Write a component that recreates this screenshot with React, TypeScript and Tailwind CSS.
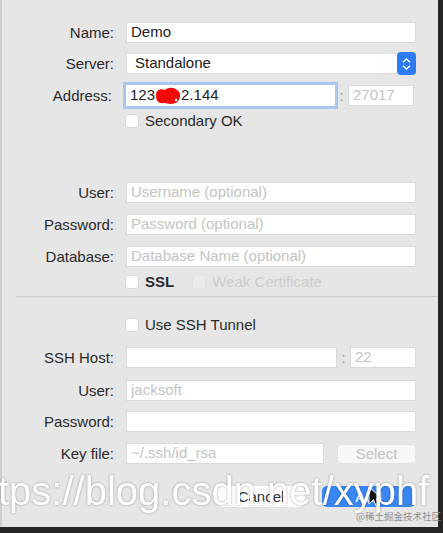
import type { ReactNode } from 'react';

const font = { fontFamily: '"Liberation Sans", Arial, sans-serif' };

function Label({ children }: { children: ReactNode }) {
  return (
    <div className="w-[112px] shrink-0 text-right text-[15px] leading-none text-[#2a2a2a]">
      {children}
    </div>
  );
}

function Field({ value, placeholder, className = 'w-[290px]' }: { value?: string; placeholder?: string; className?: string }) {
  return (
    <input
      readOnly
      defaultValue={value}
      placeholder={placeholder}
      className={`h-[21px] bg-white border border-[#dadada] px-[4px] text-[15px] text-[#222] placeholder:text-[#c4c4c4] outline-none ${className}`}
      style={font}
    />
  );
}

function Check({ label, faded }: { label: string; faded?: boolean }) {
  return (
    <div className="flex items-center gap-[6px]">
      <span className={`w-[14px] h-[14px] rounded-[3px] border ${faded ? 'bg-[#ececec] border-[#e2e2e2]' : 'bg-white border-[#d8d8d8]'}`} />
      <span className={`text-[15px] leading-none ${faded ? 'text-[#cdcdcd]' : 'text-[#2a2a2a]'}`}>{label}</span>
    </div>
  );
}

function Row({ label, children, className = '' }: { label: string; children: ReactNode; className?: string }) {
  return (
    <div className={`flex items-center gap-[12px] h-[21px] ${className}`}>
      <Label>{label}</Label>
      {children}
    </div>
  );
}

export default function App() {
  return (
    <div className="relative w-[443px] h-[533px] overflow-hidden bg-[#262626]" style={font}>
      <div className="w-[438px] h-[527px] bg-[#e6e6e6] border-l-2 border-[#cfcfcf] flex flex-col">
        <div className="flex flex-col pt-[22px]">
          <Row label="Name:">
            <Field value="Demo" />
          </Row>

          <Row label="Server:" className="mt-[10px]">
            <div className="relative w-[290px] h-[21px] bg-white border border-[#e0e0e0] flex items-center pl-[8px] text-[15px] text-[#222]">
              Standalone
              <span className="absolute right-[-1px] top-[-2px] w-[19px] h-[23px] rounded-[4px] bg-[#2f7cf2] flex flex-col items-center justify-center gap-[2px]">
                <svg width="9" height="5" viewBox="0 0 9 5"><path d="M1 4.2 4.5 1 8 4.2" stroke="white" strokeWidth="1.4" fill="none" /></svg>
                <svg width="9" height="5" viewBox="0 0 9 5"><path d="M1 0.8 4.5 4 8 0.8" stroke="white" strokeWidth="1.4" fill="none" /></svg>
              </span>
            </div>
          </Row>

          <div className="flex items-center h-[21px] mt-[11px]">
            <div className="w-[110px] shrink-0 text-right text-[15px] leading-none text-[#2a2a2a]">Address:</div>
            <div className="ml-[14px] w-[209px] h-[21px] bg-white shadow-[0_0_0_3px_#a9c6ee] flex items-center pl-[4px] text-[15px] text-[#222]">
              123
              <svg width="28" height="18" viewBox="0 0 28 18" className="mx-[-1px]">
                <path d="M2 9C1 4 6 1 11 3c3-3 9-3 12 0 4 2 4 8 1 11-3 4-10 3-14 2C5 17 2 14 2 9Z" fill="#f20a0a" />
                <circle cx="22" cy="13" r="1.2" fill="#fff" />
              </svg>
              2.144
            </div>
            <span className="w-[13px] text-center text-[15px] text-[#8a8a8a] leading-none">:</span>
            <Field placeholder="27017" className="w-[66px]" />
          </div>

          <div className="flex mt-[7px] pl-[123px]">
            <Check label="Secondary OK" />
          </div>

          <Row label="User:" className="mt-[54px]">
            <Field placeholder="Username (optional)" />
          </Row>
          <Row label="Password:" className="mt-[11px]">
            <Field placeholder="Password (optional)" />
          </Row>
          <Row label="Database:" className="mt-[11px]">
            <Field placeholder="Database Name (optional)" />
          </Row>

          <div className="flex items-center gap-[18px] mt-[7px] pl-[123px]">
            <div className="flex items-center gap-[6px]">
              <span className="w-[14px] h-[14px] rounded-[3px] border bg-white border-[#d8d8d8]" />
              <span className="text-[15px] leading-none font-semibold text-[#2a2a2a]">SSL</span>
            </div>
            <Check label="Weak Certificate" faded />
          </div>
        </div>

        <div className="mt-[7px] ml-[14px] border-t border-[#cbcbcb]" />

        <div className="flex flex-col">
          <div className="flex mt-[20px] pl-[123px]">
            <Check label="Use SSH Tunnel" />
          </div>

          <div className="flex items-center h-[21px] mt-[15px]">
            <Label>SSH Host:</Label>
            <Field className="ml-[12px] w-[211px]" />
            <span className="w-[13px] text-center text-[15px] text-[#8a8a8a] leading-none">:</span>
            <Field placeholder="22" className="w-[66px]" />
          </div>
          <Row label="User:" className="mt-[12px]">
            <Field placeholder="jacksoft" />
          </Row>
          <Row label="Password:" className="mt-[10px]">
            <Field />
          </Row>
          <Row label="Key file:" className="mt-[11px]">
            <Field placeholder="~/.ssh/id_rsa" className="w-[198px]" />
            <button className="ml-[1px] w-[79px] h-[20px] rounded-[3px] bg-[#f7f7f7] border border-[#e2e2e2] text-[15px] text-[#c2c2c2] leading-none">
              Select
            </button>
          </Row>

          <div className="flex justify-end gap-[17px] mt-[22px] pr-[23px]">
            <button className="w-[88px] h-[21px] rounded-[5px] bg-white text-[15px] text-[#333] leading-none shadow-[0_0_1px_#bbb]">
              Cancel
            </button>
            <button className="w-[93px] h-[21px] rounded-[5px] bg-[#3a87f3] text-[15px] text-white leading-none">
              Add
            </button>
          </div>
        </div>
      </div>

      <svg className="absolute left-[368px] top-[486px]" width="16" height="22" viewBox="0 0 16 22">
        <path d="M1 1v17l4.5-4.2 3 6.8 3-1.4-3-6.6H14Z" fill="#111" stroke="#fff" strokeWidth="1" />
      </svg>

      <div
        className="absolute left-[-2px] top-[471px] text-[40px] leading-none text-white whitespace-nowrap drop-shadow-[0_0_1px_rgba(0,0,0,0.35)]"
        style={font}
      >
        tps://blog.csdn.net/xyphf
      </div>
      <div
        className="absolute right-[2px] top-[512px] text-[9.5px] leading-none text-[#8e8e8e] whitespace-nowrap"
        style={{ fontFamily: '"Noto Sans CJK SC", sans-serif' }}
      >
        @稀土掘金技术社区
      </div>
    </div>
  );
}
